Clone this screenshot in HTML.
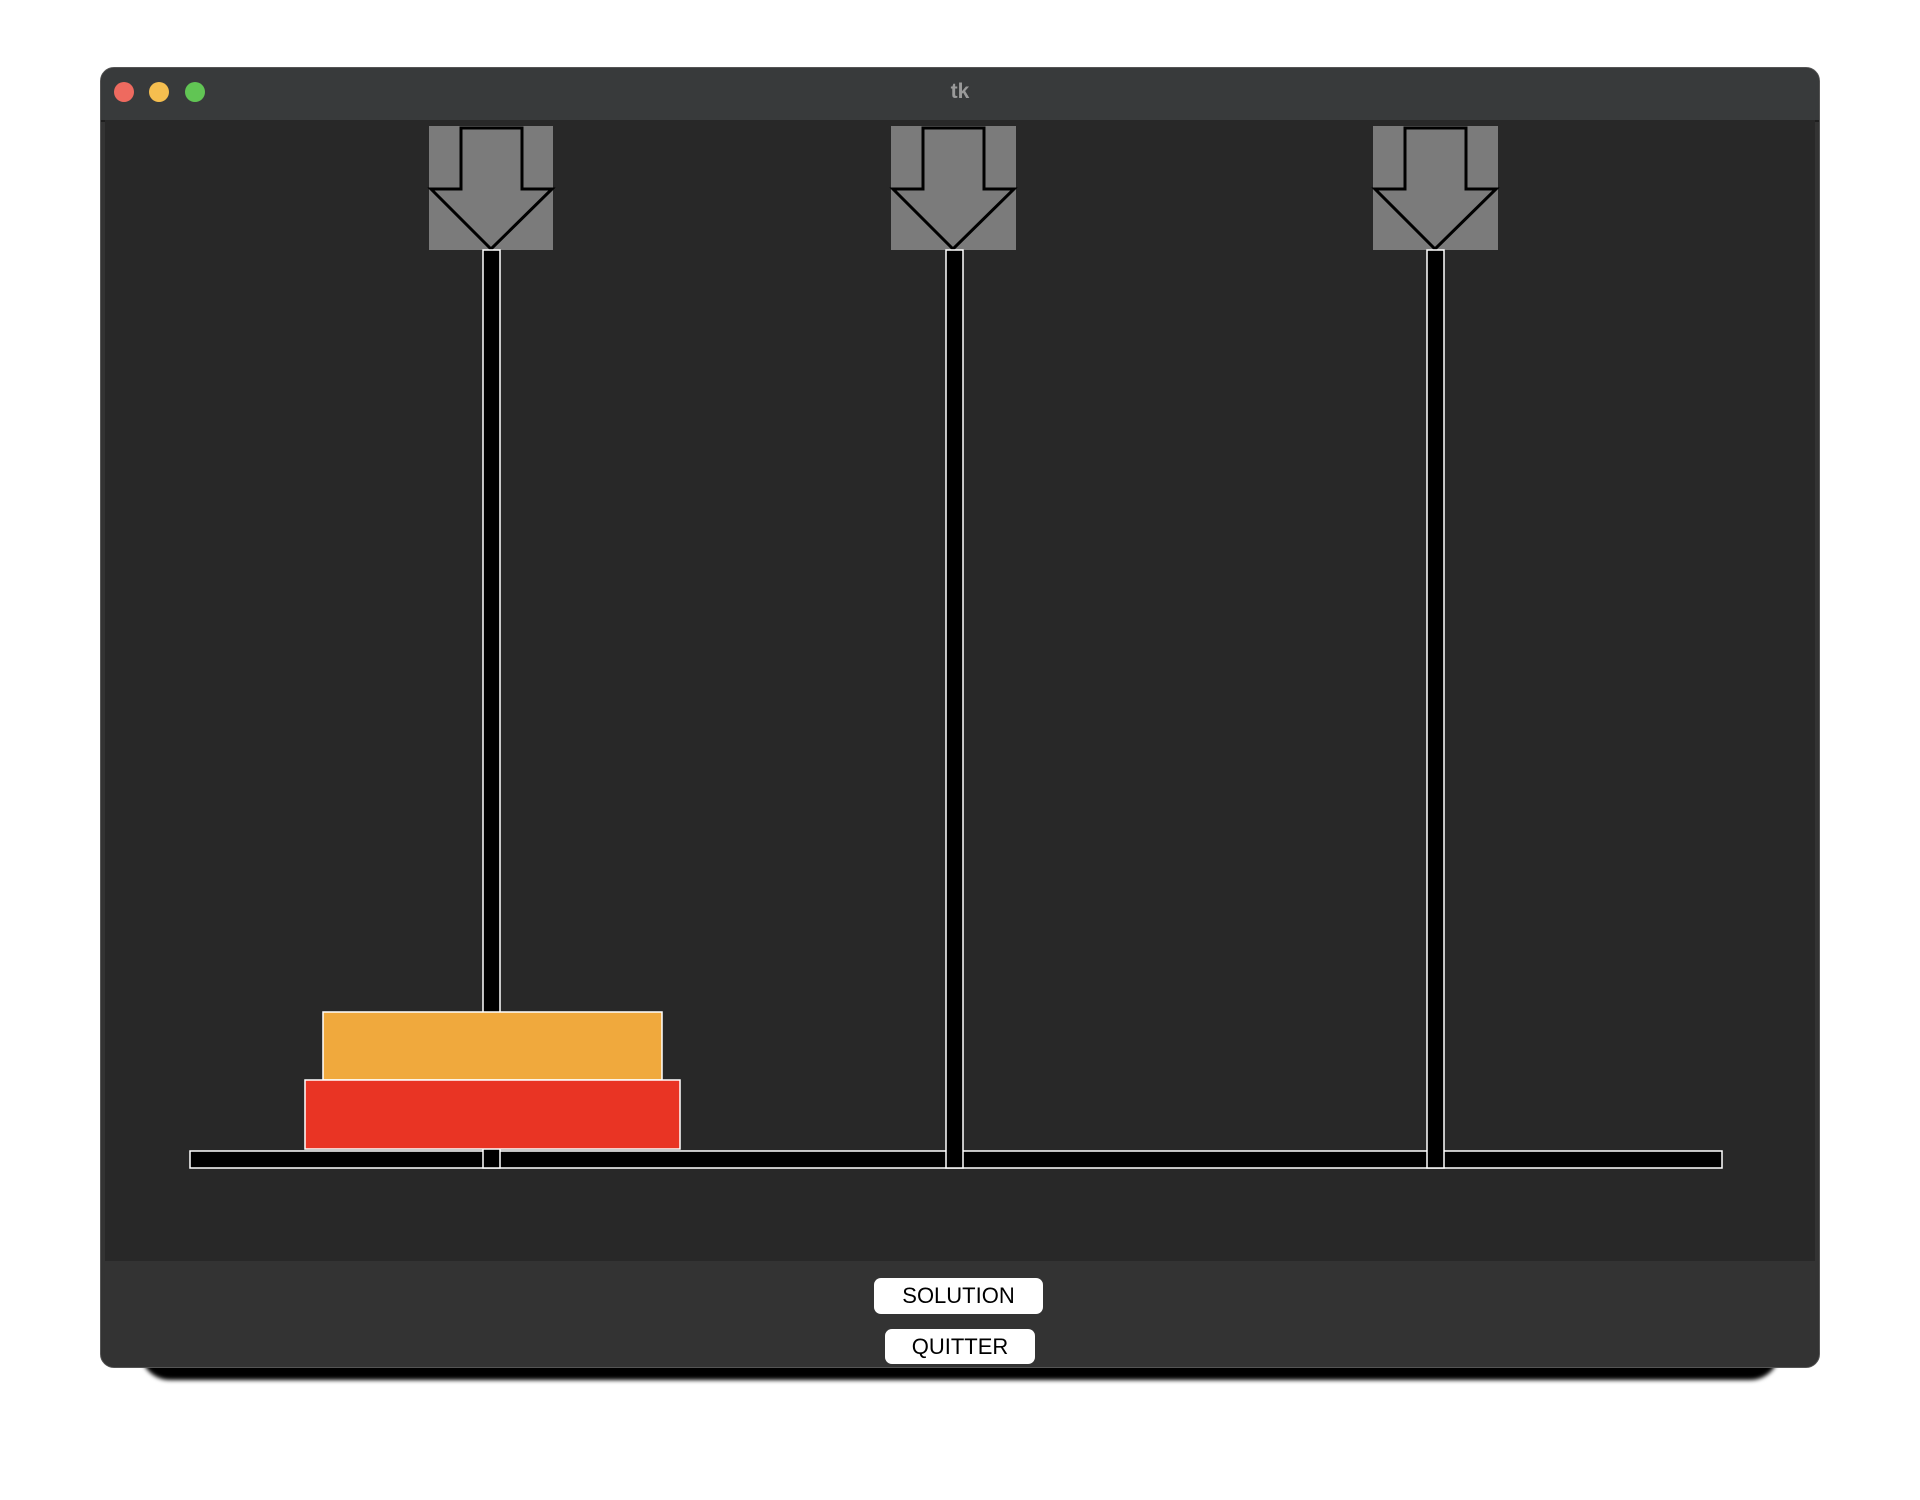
<!DOCTYPE html>
<html><head><meta charset="utf-8"><style>
body{margin:0;width:1920px;height:1500px;background:#fff;position:relative;overflow:hidden;font-family:"Liberation Sans",sans-serif}
.shadow{position:absolute;left:140px;top:1350px;width:1640px;height:30px;background:#000;border-radius:0 0 30px 30px;filter:blur(2px)}
.win{position:absolute;left:100px;top:67px;width:1720px;height:1301px;background:#333;border-radius:14px;overflow:hidden;border:1px solid #555;box-sizing:border-box}
.title{position:absolute;left:0;top:0;width:100%;height:52px;background:#383a3b;border-bottom:2px solid #1e1e1e}
.dot{position:absolute;top:82px;width:20px;height:20px;border-radius:50%}
.canvas{position:absolute;left:105px;top:120px;width:1710px;height:1141px;background:#282828}
.abs{position:absolute}
.btn{position:absolute;background:#fff;border-radius:7px;color:#000;font-size:22px;text-align:center;box-sizing:border-box}
</style></head><body>
<div class="shadow"></div>
<div class="win"><div class="title"></div></div>
<div class="dot" style="left:114px;background:#ee6a5f"></div>
<div class="dot" style="left:149px;background:#f5be4f"></div>
<div class="dot" style="left:185px;background:#61c554"></div>
<div class="abs" style="left:940px;top:80px;width:40px;text-align:center;color:#9a9a9a;font-weight:bold;font-size:21px">tk</div>
<div class="canvas"></div>
<svg class="abs" style="left:0;top:0" width="1920" height="1500">
<g fill="#7b7b7b">
<rect x="429" y="126" width="124" height="124"/>
<rect x="891" y="126" width="125" height="124"/>
<rect x="1373" y="126" width="125" height="124"/>
</g>
<g fill="none" stroke="#000" stroke-width="3" stroke-linejoin="miter">
<path d="M461 128H522V189H552L491 249L431 189H461Z"/>
<path d="M923 128H984V189H1014L953 249L893 189H923Z"/>
<path d="M1405 128H1466V189H1496L1435 249L1375 189H1405Z"/>
</g>
<g fill="#000" stroke="#fff" stroke-width="1.5">
<rect x="190" y="1151" width="1532" height="17"/>
<rect x="483" y="250" width="17" height="918"/>
<rect x="946" y="250" width="17" height="918"/>
<rect x="1427" y="250" width="17" height="918"/>
</g>
<rect x="323" y="1012" width="339" height="68" fill="#f0a93d" stroke="#fff" stroke-width="1.5"/>
<rect x="305" y="1080" width="375" height="69" fill="#e93424" stroke="#fff" stroke-width="1.5"/>
</svg>
<div class="btn" style="left:874px;top:1278px;width:169px;height:36px;line-height:36px">SOLUTION</div>
<div class="btn" style="left:885px;top:1329px;width:150px;height:35px;line-height:35px">QUITTER</div>
</body></html>
